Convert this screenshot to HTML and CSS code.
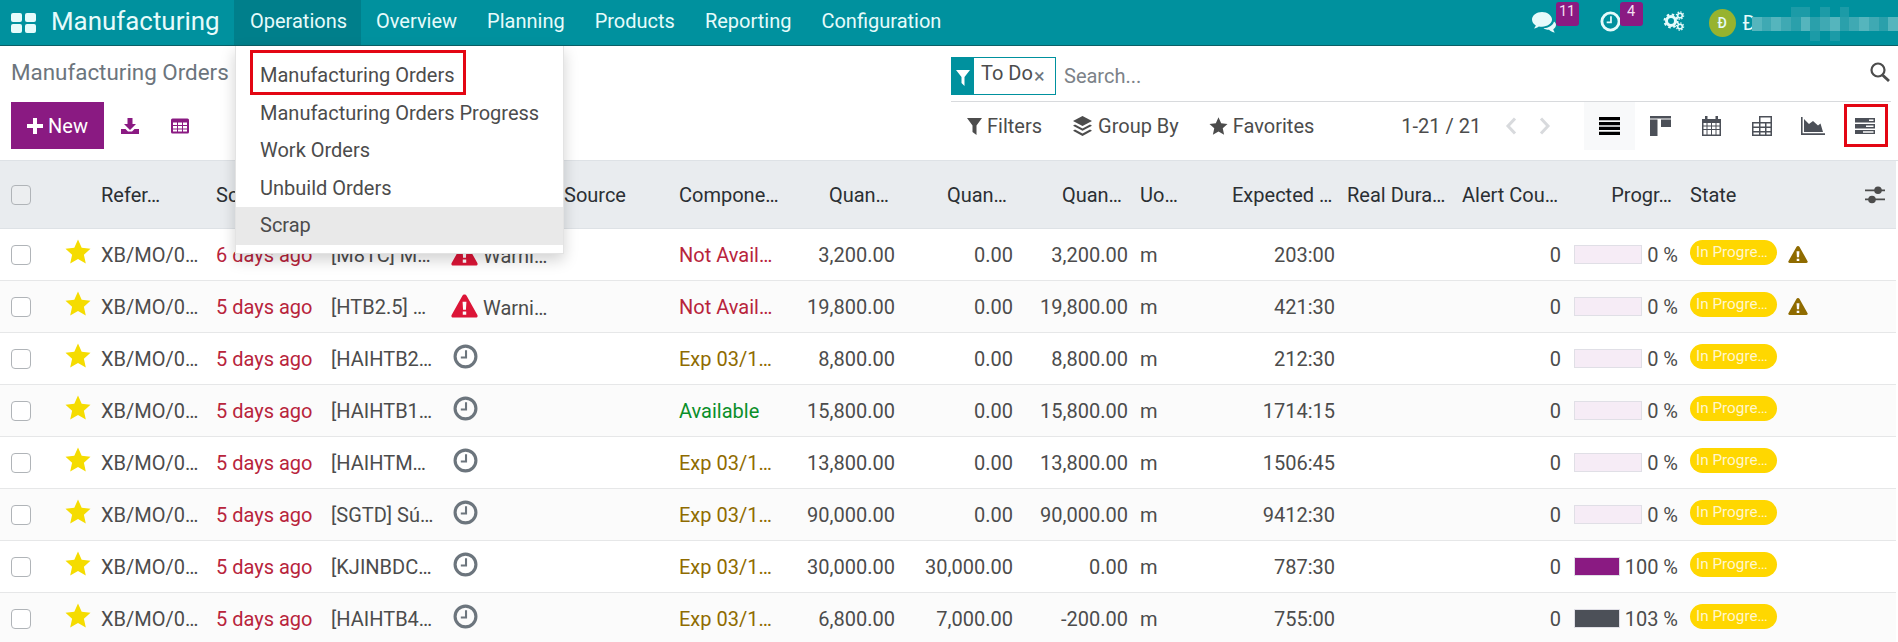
FILE: index.html
```html
<!DOCTYPE html>
<html lang="en">

<head>
    <meta charset="UTF-8">
    <meta name="viewport" content="width=device-width, initial-scale=1.0">
    <title>Manufacturing Orders</title>
    <link rel="stylesheet" href="styles.css">
</head>

<body>
    <svg class="sprite" xmlns="http://www.w3.org/2000/svg">
        <symbol id="i-star" viewBox="0 0 26 25"><path d="M13 0.5l3.7 8.2 8.8 1-6.6 6 1.9 8.8L13 20l-7.800 4.500 1.900-8.800-6.600-6 8.800-1z"/></symbol>
        <symbol id="i-warn" viewBox="0 0 28 25"><path fill-rule="evenodd" d="M14 0.500c1 0 1.700 0.500 2.200 1.400l11.200 20c0.700 1.300-0.200 2.600-1.600 2.600H2.200c-1.400 0-2.300-1.300-1.600-2.600l11.200-20C12.300 1 13 0.500 14 0.500zM12 8l0.500 8.500h3L16 8zM12.200 18.300v3.400h3.600v-3.400z"/></symbol>
        <symbol id="i-clock" viewBox="0 0 24 24"><circle cx="12" cy="12" r="10" fill="none" stroke="currentColor" stroke-width="3"/><path d="M12.500 6v7H7.500" fill="none" stroke="currentColor" stroke-width="2"/></symbol>
    </svg>

    <nav class="navbar">
        <svg class="apps-icon" viewBox="0 0 25 20"><rect x="0" y="0" width="11" height="9" rx="2"/><rect x="14" y="0" width="11" height="9" rx="2"/><rect x="0" y="11" width="11" height="9" rx="2"/><rect x="14" y="11" width="11" height="9" rx="2"/></svg>
        <span class="app-name">Manufacturing</span>
        <ul class="nav-menu">
            <li class="active">Operations</li>
            <li>Overview</li>
            <li>Planning</li>
            <li>Products</li>
            <li>Reporting</li>
            <li>Configuration</li>
        </ul>
        <div class="systray">
            <div class="tray-item chat">
                <svg viewBox="0 0 25 21"><path d="M10 0C4.500 0 0 3.400 0 7.600c0 2.500 1.500 4.600 3.800 6-0.300 1-1 2-1.800 2.800 1.800-0.200 3.600-1 4.800-2 1 0.200 2.100 0.300 3.200 0.300 5.500 0 10-3.100 10-7.100S15.500 0 10 0z"/><path d="M22 9.500c-1 4-5.500 6.500-10.500 6.800 1.500 1 3.500 1.600 5.500 1.500 1.400 1.300 3.500 2.500 6 2.700-0.800-0.800-1.500-2-1.700-3.300 1.700-1 2.700-2.600 2.700-4.400 0-1.200-0.700-2.300-2-3.300z"/></svg>
                <span class="tray-badge">11</span>
            </div>
            <div class="tray-item activity">
                <svg viewBox="0 0 22 22"><circle cx="11" cy="11" r="9" fill="none" stroke="currentColor" stroke-width="3"/><path d="M11.500 5.500v6.500H7" fill="none" stroke="currentColor" stroke-width="1.800"/></svg>
                <span class="tray-badge">4</span>
            </div>
            <svg class="gears" viewBox="0 0 22 20">
                <circle cx="8" cy="10" r="4.500" fill="none" stroke="#e6fbfb" stroke-width="3"/>
                <circle cx="8" cy="10" r="6.500" fill="none" stroke="#e6fbfb" stroke-width="2" stroke-dasharray="2.500 2.600"/>
                <circle cx="17" cy="4.500" r="2.300" fill="none" stroke="#e6fbfb" stroke-width="1.600"/>
                <circle cx="17" cy="4.500" r="3.600" fill="none" stroke="#e6fbfb" stroke-width="1.300" stroke-dasharray="1.400 1.400"/>
                <circle cx="17" cy="15.500" r="2.300" fill="none" stroke="#e6fbfb" stroke-width="1.600"/>
                <circle cx="17" cy="15.500" r="3.600" fill="none" stroke="#e6fbfb" stroke-width="1.300" stroke-dasharray="1.400 1.400"/>
            </svg>
            <span class="avatar">Đ</span>
            <span class="user-name">Đ</span>
            <!-- user name is pixelated out in the screenshot -->
            <div class="mosaic">
                <i class="m2"></i><i class="m1"></i><i class="m2"></i><i class="m1"></i><i class="m3 up"></i><i class="m2 up"></i><i class="m3 down"></i><i class="m1 up"></i><i class="m2 down"></i><i class="m3 up"></i><i class="m1"></i><i class="m2"></i><i class="m1"></i><i class="m3"></i><i class="m2"></i>
            </div>
        </div>
    </nav>

    <div class="control-panel">
        <div class="panel-left">
            <div class="breadcrumb">Manufacturing Orders</div>
            <div class="main-buttons">
                <button class="btn-new">
                    <svg viewBox="0 0 16 16"><path d="M6 0h4v6h6v4h-6v6H6v-6H0V6h6z"/></svg>
                    New
                </button>
                <svg class="tool-icon download" viewBox="0 0 18 16"><path d="M6.500 0h5v6h3.500L9 12 3 6h3.500z"/><path d="M0 11h4.500L7 13.500h4L13.500 11H18v5H0z"/></svg>
                <svg class="tool-icon table-view" viewBox="0 0 18 15"><path fill-rule="evenodd" d="M1.500 0h15A1.500 1.500 0 0 1 18 1.500v12a1.500 1.500 0 0 1-1.500 1.500h-15A1.500 1.500 0 0 1 0 13.500v-12A1.500 1.500 0 0 1 1.500 0zM2 4v2.500h4V4zm5 0v2.500h4V4zm5 0v2.500h4V4zM2 7.500V10h4V7.500zm5 0V10h4V7.500zm5 0V10h4V7.500zM2 11v2h4v-2zm5 0v2h4v-2zm5 0v2h4v-2z"/></svg>
            </div>
        </div>
        <div class="panel-right">
            <div class="search-row">
                <div class="facet">
                    <span class="facet-icon"><svg viewBox="0 0 14 16"><path d="M0 0h14L8.500 7v9l-3-3V7z"/></svg></span>
                    <span class="facet-label">To Do</span>
                    <span class="facet-close">×</span>
                </div>
                <span class="search-text">Search...</span>
                <svg class="search-icon" viewBox="0 0 22 20"><circle cx="9" cy="8" r="6.500" fill="none" stroke="currentColor" stroke-width="2.200"/><path d="M13.500 13l6.500 6" stroke="currentColor" stroke-width="2.800"/></svg>
            </div>
            <div class="tools-row">
                <div class="filter-item">
                    <svg class="filter-svg" viewBox="0 0 15 17"><path d="M0 0h15L9.500 7.500V17l-4-3V7.500z"/></svg>
                    Filters
                </div>
                <div class="filter-item">
                    <svg class="group-svg" viewBox="0 0 21 21"><path d="M10.500 0L20 5l-9.500 5L1 5z"/><path d="M3 8.500l7.500 4 7.500-4 2 1.300-9.500 5-9.500-5z"/><path d="M3 13.500l7.500 4 7.500-4 2 1.300-9.500 5.200-9.500-5.200z"/></svg>
                    Group By
                </div>
                <div class="filter-item">
                    <svg class="fav-svg"><use href="#i-star"/></svg>
                    Favorites
                </div>
                <div class="pager-group">
                    <span>1-21 / 21</span>
                    <svg class="pager-arrow first" viewBox="0 0 12 18"><path d="M10 1.500L3 9l7 7.500" fill="none" stroke="currentColor" stroke-width="3"/></svg>
                    <svg class="pager-arrow" viewBox="0 0 12 18"><path d="M2 1.500L9 9l-7 7.500" fill="none" stroke="currentColor" stroke-width="3"/></svg>
                </div>
                <div class="view-switch">
                    <button class="view-btn active">
                        <svg class="ic-list" viewBox="0 0 21 18"><path d="M0 0h21v3.200H0zM0 5h21v3.200H0zM0 9.800h21V13H0zM0 14.800h21V18H0z"/></svg>
                    </button>
                    <button class="view-btn">
                        <svg class="ic-kanban" viewBox="0 0 21 20"><path d="M0 0h21v2.500H0zM0 3.500h7.500V20H0zM11 3.500h10V11H11z"/></svg>
                    </button>
                    <button class="view-btn">
                        <svg class="ic-calendar" viewBox="0 0 19 20"><path fill-rule="evenodd" d="M3 0h2.500v3H13.500V0H16v3h3v17H0V3h3zM1.500 7v2.500h3V7zm4 0v2.500h3.500V7zm4.500 0v2.500h3.500V7zm4.500 0v2.500h3V7zM1.500 10.500V13h3v-2.500zm4 0V13h3.500v-2.500zm4.500 0V13h3.500v-2.500zm4.500 0V13h3v-2.500zM1.500 14v4.500h3V14zm4 0v4.500h3.500V14zm4.500 0v4.500h3.500V14zm4.500 0v4.500h3V14z"/></svg>
                    </button>
                    <button class="view-btn">
                        <svg class="ic-pivot" viewBox="0 0 20 20"><path fill-rule="evenodd" d="M7 0h13v20H0V6h7zM8.500 1.500V6h10V1.500zM1.500 7.500v3h5.500v-3zm7 0v3h4.500v-3zm6 0v3h4v-3zm-13 4.500v3h5.500v-3zm7 0v3h4.500v-3zm6 0v3h4v-3zm-13 4.500v2h5.500v-2zm7 0v2h4.500v-2zm6 0v2h4v-2z"/></svg>
                    </button>
                    <button class="view-btn">
                        <svg class="ic-graph" viewBox="0 0 24 18"><path d="M0 0h1.600v16.200H24V18H0z"/><path d="M3 15V2l5 5 4-3 5 4.500 2.500-2 2.500 8.500z"/></svg>
                    </button>
                    <button class="view-btn gantt">
                        <svg class="ic-gantt" viewBox="0 0 20 16"><path fill-rule="evenodd" d="M0 0h20v4.500H0zM14 1.500v1.500h4.500V1.500zM0 6h20v4.500H0zM11 7.500V9h7.500V7.500zM0 12h20v4H0zM8 13.300v1.400h10.500v-1.400z"/></svg>
                    </button>
                </div>
            </div>
        </div>
    </div>

    <table class="order-table">
        <colgroup>
            <col class="c-check"><col class="c-star"><col class="c-wide"><col class="c-wide"><col class="c-prod"><col class="c-wide"><col class="c-wide">
            <col class="c-comp"><col class="c-qty"><col class="c-qty2"><col class="c-wide"><col class="c-uom"><col class="c-wide"><col class="c-wide"><col class="c-alert"><col class="c-prog"><col class="c-state"><col class="c-opt">
        </colgroup>
        <thead>
            <tr>
                <th><span class="check"></span></th>
                <th></th>
                <th>Refer…</th>
                <th>Sc</th>
                <th></th>
                <th></th>
                <th>Source</th>
                <th>Compone…</th>
                <th class="num">Quan…</th>
                <th class="num">Quan…</th>
                <th class="num">Quan…</th>
                <th>Uo…</th>
                <th class="num">Expected …</th>
                <th>Real Dura…</th>
                <th>Alert Cou…</th>
                <th class="num">Progr…</th>
                <th>State</th>
                <th>
                    <svg class="opt-icon" viewBox="0 0 20 18"><path d="M0 3.500h20v1.800H0zM0 12.500h20v1.800H0z"/><circle cx="13" cy="4.300" r="3.800"/><circle cx="7" cy="13.500" r="3.800"/></svg>
                </th>
            </tr>
        </thead>
        <tbody>
            <tr>
                <td><span class="check"></span></td>
                <td><svg class="star"><use href="#i-star"/></svg></td>
                <td>XB/MO/0…</td>
                <td class="late">6 days ago</td>
                <td>[M8TC] M…</td>
                <td><svg class="warn-red"><use href="#i-warn"/></svg> Warni…</td>
                <td></td>
                <td class="late">Not Avail…</td>
                <td class="val">3,200.00</td>
                <td class="val">0.00</td>
                <td class="val">3,200.00</td>
                <td>m</td>
                <td class="val">203:00</td>
                <td></td>
                <td class="val">0</td>
                <td><div class="progress"><div class="bar"></div><span>0 %</span></div></td>
                <td><div class="state-cell"><span class="badge">In Progre…</span><svg class="warn-brown"><use href="#i-warn"/></svg></div></td>
                <td></td>
            </tr>
            <tr>
                <td><span class="check"></span></td>
                <td><svg class="star"><use href="#i-star"/></svg></td>
                <td>XB/MO/0…</td>
                <td class="late">5 days ago</td>
                <td>[HTB2.5] …</td>
                <td><svg class="warn-red"><use href="#i-warn"/></svg> Warni…</td>
                <td></td>
                <td class="late">Not Avail…</td>
                <td class="val">19,800.00</td>
                <td class="val">0.00</td>
                <td class="val">19,800.00</td>
                <td>m</td>
                <td class="val">421:30</td>
                <td></td>
                <td class="val">0</td>
                <td><div class="progress"><div class="bar"></div><span>0 %</span></div></td>
                <td><div class="state-cell"><span class="badge">In Progre…</span><svg class="warn-brown"><use href="#i-warn"/></svg></div></td>
                <td></td>
            </tr>
            <tr>
                <td><span class="check"></span></td>
                <td><svg class="star"><use href="#i-star"/></svg></td>
                <td>XB/MO/0…</td>
                <td class="late">5 days ago</td>
                <td>[HAIHTB2…</td>
                <td><svg class="clock"><use href="#i-clock"/></svg></td>
                <td></td>
                <td class="expected">Exp 03/1…</td>
                <td class="val">8,800.00</td>
                <td class="val">0.00</td>
                <td class="val">8,800.00</td>
                <td>m</td>
                <td class="val">212:30</td>
                <td></td>
                <td class="val">0</td>
                <td><div class="progress"><div class="bar"></div><span>0 %</span></div></td>
                <td><div class="state-cell"><span class="badge">In Progre…</span></div></td>
                <td></td>
            </tr>
            <tr>
                <td><span class="check"></span></td>
                <td><svg class="star"><use href="#i-star"/></svg></td>
                <td>XB/MO/0…</td>
                <td class="late">5 days ago</td>
                <td>[HAIHTB1…</td>
                <td><svg class="clock"><use href="#i-clock"/></svg></td>
                <td></td>
                <td class="available">Available</td>
                <td class="val">15,800.00</td>
                <td class="val">0.00</td>
                <td class="val">15,800.00</td>
                <td>m</td>
                <td class="val">1714:15</td>
                <td></td>
                <td class="val">0</td>
                <td><div class="progress"><div class="bar"></div><span>0 %</span></div></td>
                <td><div class="state-cell"><span class="badge">In Progre…</span></div></td>
                <td></td>
            </tr>
            <tr>
                <td><span class="check"></span></td>
                <td><svg class="star"><use href="#i-star"/></svg></td>
                <td>XB/MO/0…</td>
                <td class="late">5 days ago</td>
                <td>[HAIHTM…</td>
                <td><svg class="clock"><use href="#i-clock"/></svg></td>
                <td></td>
                <td class="expected">Exp 03/1…</td>
                <td class="val">13,800.00</td>
                <td class="val">0.00</td>
                <td class="val">13,800.00</td>
                <td>m</td>
                <td class="val">1506:45</td>
                <td></td>
                <td class="val">0</td>
                <td><div class="progress"><div class="bar"></div><span>0 %</span></div></td>
                <td><div class="state-cell"><span class="badge">In Progre…</span></div></td>
                <td></td>
            </tr>
            <tr>
                <td><span class="check"></span></td>
                <td><svg class="star"><use href="#i-star"/></svg></td>
                <td>XB/MO/0…</td>
                <td class="late">5 days ago</td>
                <td>[SGTD] Sú…</td>
                <td><svg class="clock"><use href="#i-clock"/></svg></td>
                <td></td>
                <td class="expected">Exp 03/1…</td>
                <td class="val">90,000.00</td>
                <td class="val">0.00</td>
                <td class="val">90,000.00</td>
                <td>m</td>
                <td class="val">9412:30</td>
                <td></td>
                <td class="val">0</td>
                <td><div class="progress"><div class="bar"></div><span>0 %</span></div></td>
                <td><div class="state-cell"><span class="badge">In Progre…</span></div></td>
                <td></td>
            </tr>
            <tr>
                <td><span class="check"></span></td>
                <td><svg class="star"><use href="#i-star"/></svg></td>
                <td>XB/MO/0…</td>
                <td class="late">5 days ago</td>
                <td>[KJINBDC…</td>
                <td><svg class="clock"><use href="#i-clock"/></svg></td>
                <td></td>
                <td class="expected">Exp 03/1…</td>
                <td class="val">30,000.00</td>
                <td class="val">30,000.00</td>
                <td class="val">0.00</td>
                <td>m</td>
                <td class="val">787:30</td>
                <td></td>
                <td class="val">0</td>
                <td><div class="progress"><div class="bar"><div class="fill" style="width: 100%"></div></div><span>100 %</span></div></td>
                <td><div class="state-cell"><span class="badge">In Progre…</span></div></td>
                <td></td>
            </tr>
            <tr>
                <td><span class="check"></span></td>
                <td><svg class="star"><use href="#i-star"/></svg></td>
                <td>XB/MO/0…</td>
                <td class="late">5 days ago</td>
                <td>[HAIHTB4…</td>
                <td><svg class="clock"><use href="#i-clock"/></svg></td>
                <td></td>
                <td class="expected">Exp 03/1…</td>
                <td class="val">6,800.00</td>
                <td class="val">7,000.00</td>
                <td class="val">-200.00</td>
                <td>m</td>
                <td class="val">755:00</td>
                <td></td>
                <td class="val">0</td>
                <td><div class="progress"><div class="bar"><div class="fill over" style="width: 100%"></div></div><span>103 %</span></div></td>
                <td><div class="state-cell"><span class="badge">In Progre…</span></div></td>
                <td></td>
            </tr>
        </tbody>
    </table>

    <!-- Operations dropdown, sits over the table -->
    <ul class="dropdown">
        <li class="marked">Manufacturing Orders</li>
        <li>Manufacturing Orders Progress</li>
        <li>Work Orders</li>
        <li>Unbuild Orders</li>
        <li class="hovered">Scrap</li>
    </ul>
</body>

</html>
```

FILE: styles.css
```css
*,
*::after {
    margin: 0;
    padding: 0;
    box-sizing: border-box;
}

html,
body {
    height: 100%;
    overflow: hidden;
}

body {
    position: relative;
    font-family: Roboto, "Liberation Sans", sans-serif;
    font-size: 20px;
    color: #4c4c4c;
    background-color: #fff;
}

ul {
    list-style: none;
}

button {
    font: inherit;
    border: none;
    background: none;
}

.sprite {
    display: none;
}

/* top bar */
.navbar {
    display: flex;
    align-items: center;
    height: 46px;
    padding-left: 11px;
    background-color: #00919e;
    border-bottom: 1px solid #0b5f66;
    color: #e6fbfb;
}

.apps-icon {
    width: 25px;
    height: 20px;
    margin-right: 15px;
    fill: #e6fbfb;
}

.app-name {
    width: 183px;
    margin-top: -3px;
    font-size: 25.900px;
}

.nav-menu {
    display: flex;
    align-self: stretch;
}

.nav-menu li {
    display: flex;
    align-items: center;
    padding: 0 15px 3px;
}

.nav-menu li.active {
    width: 127px;
    padding-left: 16px;
    background-color: #007f8b;
}

.systray {
    display: flex;
    align-items: center;
    margin-left: auto;
}

.tray-item {
    display: flex;
    align-self: flex-start;
    height: 45px;
}

.tray-item svg {
    fill: currentColor;
    margin-top: 12px;
}

.chat svg {
    width: 25px;
    height: 21px;
}

.activity {
    margin-left: 21px;
}

.activity svg {
    width: 21px;
    height: 21px;
    margin-top: 11px;
}

.tray-badge {
    width: 23px;
    height: 24px;
    margin-top: 2px;
    margin-left: -1px;
    border-radius: 3px;
    background-color: #8a1a82;
    color: #f3dff1;
    font-size: 14.500px;
    line-height: 19px;
    text-align: center;
}

.gears {
    width: 22px;
    height: 20px;
    margin-left: 20px;
    margin-top: -3px;
}

.avatar {
    display: flex;
    align-items: center;
    justify-content: center;
    width: 27px;
    height: 28px;
    margin-left: 24px;
    border-radius: 50%;
    background-color: #97b32f;
    font-size: 14px;
    font-weight: 500;
}

.user-name {
    margin-left: 7px;
}

.mosaic {
    display: flex;
    width: 146px;
    height: 14px;
    margin-top: 2px;
    margin-left: -4px;
}

.mosaic i {
    flex: 1;
}

.m1 {
    background-color: #3fa9b3;
}

.m2 {
    background-color: #55b5bd;
}

.m3 {
    background-color: #2aa0ab;
}

.mosaic .up {
    box-shadow: 0 -10px 0 #1c9ba7;
}

.mosaic .down {
    box-shadow: 0 10px 0 #1c9ba7;
}

/* control panel */
.control-panel {
    display: grid;
    grid-template-columns: 951px 1fr;
    height: 115px;
    padding-right: 7px;
    border-bottom: 1px solid #dee2e6;
}

.panel-left {
    padding-left: 11px;
}

.breadcrumb {
    height: 56px;
    font-size: 22.400px;
    line-height: 53px;
    color: #6c757d;
}

.main-buttons {
    display: flex;
    align-items: center;
}

.btn-new {
    display: flex;
    align-items: center;
    justify-content: center;
    gap: 5px;
    width: 93px;
    height: 47px;
    background-color: #8a1a82;
    color: #fff;
}

.btn-new svg {
    width: 16px;
    height: 16px;
    fill: #fff;
}

.tool-icon {
    fill: #8a1a82;
    width: 18px;
    height: 16px;
}

.download {
    margin-left: 17px;
}

.table-view {
    margin-left: 32px;
}

.search-row {
    display: flex;
    align-items: center;
    height: 56px;
    padding-top: 7px;
    padding-bottom: 2px;
    border-bottom: 1px solid #d8dadd;
}

.facet {
    display: flex;
    flex: none;
    width: 105px;
    height: 38px;
    border: 1px solid #00919e;
}

.facet-icon {
    display: flex;
    align-items: center;
    justify-content: center;
    width: 22px;
    background-color: #00919e;
}

.facet-icon svg {
    width: 14px;
    height: 16px;
    margin-top: 4px;
    fill: #fff;
}

.facet-label {
    margin-left: 7px;
    line-height: 30px;
    white-space: nowrap;
    color: #4c4c4c;
}

.facet-close {
    margin-left: 1px;
    line-height: 36px;
    color: #6c757d;
}

.search-text {
    margin-left: 8px;
    color: #7c8288;
}

.search-icon {
    width: 22px;
    height: 20px;
    margin-left: auto;
    margin-top: -9px;
    color: #4c4c4c;
}

.tools-row {
    display: flex;
    align-items: center;
    height: 48px;
    padding-left: 16px;
}

.filter-item {
    display: flex;
    align-items: center;
    gap: 5px;
    margin-right: 30px;
}

.filter-item svg {
    fill: #4c4c4c;
}

.filter-svg {
    width: 15px;
    height: 17px;
}

.group-svg {
    width: 21px;
    height: 21px;
}

.fav-svg {
    width: 19px;
    height: 18px;
}

.pager-group {
    display: flex;
    align-items: center;
    margin-left: auto;
    margin-right: 33px;
}

.pager-arrow {
    width: 12px;
    height: 18px;
    margin-left: 22px;
    color: #d8dadd;
}

.pager-arrow.first {
    margin-left: 24px;
}

.view-switch {
    display: flex;
    margin-right: 2px;
}

.view-btn {
    display: flex;
    align-items: center;
    justify-content: center;
    width: 50.800px;
    height: 48px;
}

.view-btn svg {
    fill: #4c5058;
}

.view-btn.active {
    background-color: #f8f9fa;
}

.ic-list {
    width: 21px;
    height: 18px;
    fill: #000 !important;
}

.ic-kanban {
    width: 21px;
    height: 20px;
}

.ic-calendar {
    width: 19px;
    height: 20px;
}

.ic-pivot {
    width: 20px;
    height: 20px;
}

.ic-graph {
    width: 24px;
    height: 18px;
}

.ic-gantt {
    width: 20px;
    height: 16px;
    margin-left: 2px;
}

.gantt {
    position: relative;
}

/* red annotation box around the gantt button */
.gantt::after {
    content: "";
    position: absolute;
    top: 2px;
    right: 1px;
    bottom: 3px;
    left: 6px;
    border: 3px solid #e30613;
}

/* list view */
.order-table {
    width: 1896px;
    table-layout: fixed;
    border-collapse: separate;
    border-spacing: 0;
}

.c-check { width: 57px; }
.c-star { width: 38px; }
.c-wide { width: 115px; }
.c-prod { width: 118px; }
.c-comp { width: 117px; }
.c-qty { width: 111px; }
.c-qty2 { width: 118px; }
.c-uom { width: 92px; }
.c-alert { width: 111px; }
.c-prog { width: 117px; }
.c-state { width: 156px; }
.c-opt { width: 56px; }

th,
td {
    padding: 0 6px;
    white-space: nowrap;
    overflow: hidden;
    text-align: left;
}

th {
    height: 68px;
    background-color: #e9ecef;
    border-bottom: 1px solid #dee2e6;
    color: #2b2f33;
    font-weight: 400;
}

th.num {
    padding-right: 12px;
    text-align: right;
}

td {
    height: 52px;
    border-bottom: 1px solid #e6e7e8;
}

tbody tr:nth-child(even) td {
    background-color: #fbfbfb;
}

th:first-child,
td:first-child {
    padding-left: 11px;
}

.check {
    display: block;
    width: 20px;
    height: 20px;
    border: 1px solid #b0b4b8;
    border-radius: 4px;
    background-color: #fff;
}

th .check {
    background-color: #eceef0;
}

.star {
    display: block;
    width: 26px;
    height: 25px;
    margin-top: -6px;
    margin-left: 2px;
    fill: #f5dc00;
}

.late {
    color: #b8243c;
}

.expected {
    color: #8f6b00;
}

.available {
    color: #0a8f2a;
}

.val {
    text-align: right;
}

.warn-red {
    width: 27px;
    height: 24px;
    margin-left: 2px;
    vertical-align: -3px;
    fill: #dc1537;
}

.clock {
    display: block;
    width: 25px;
    height: 25px;
    margin-top: -5px;
    margin-left: 4px;
    color: #6c757d;
}

.progress {
    display: flex;
    align-items: center;
    gap: 5px;
    padding-left: 1px;
}

.bar {
    flex: 1;
    height: 19px;
    border: 1px solid #e0dfe6;
    background-color: #f6ecf6;
}

.fill {
    height: 100%;
    background-color: #8a1a82;
}

.fill.over {
    background-color: #4c5058;
}

.state-cell {
    display: flex;
    align-items: center;
    gap: 11px;
}

.badge {
    display: block;
    width: 87px;
    height: 25px;
    margin-top: -5px;
    padding-left: 6px;
    border-radius: 13px;
    background-color: #ffd700;
    color: #fff6cc;
    font-size: 15.300px;
    line-height: 24px;
}

.warn-brown {
    width: 20px;
    height: 19px;
    fill: #8f6b00;
}

.opt-icon {
    display: block;
    width: 20px;
    height: 18px;
    margin-left: 19px;
    fill: #4c4c4c;
}

/* dropdown over the table */
.dropdown {
    position: absolute;
    top: 46px;
    left: 235px;
    width: 329px;
    height: 208px;
    padding-top: 11px;
    background-color: #fff;
    border: 1px solid #e3e3e3;
    border-top: none;
    box-shadow: 0 6px 14px rgba(0, 0, 0, 0.18);
}

.dropdown li {
    height: 37.500px;
    padding-left: 24px;
    line-height: 37px;
}

.dropdown li.hovered {
    background-color: #e9e9e9;
}

.dropdown li.marked {
    position: relative;
}

/* red annotation box around the first entry */
.dropdown li.marked::after {
    content: "";
    position: absolute;
    top: -7px;
    left: 14px;
    width: 216px;
    height: 45px;
    border: 3px solid #e30613;
}
```
